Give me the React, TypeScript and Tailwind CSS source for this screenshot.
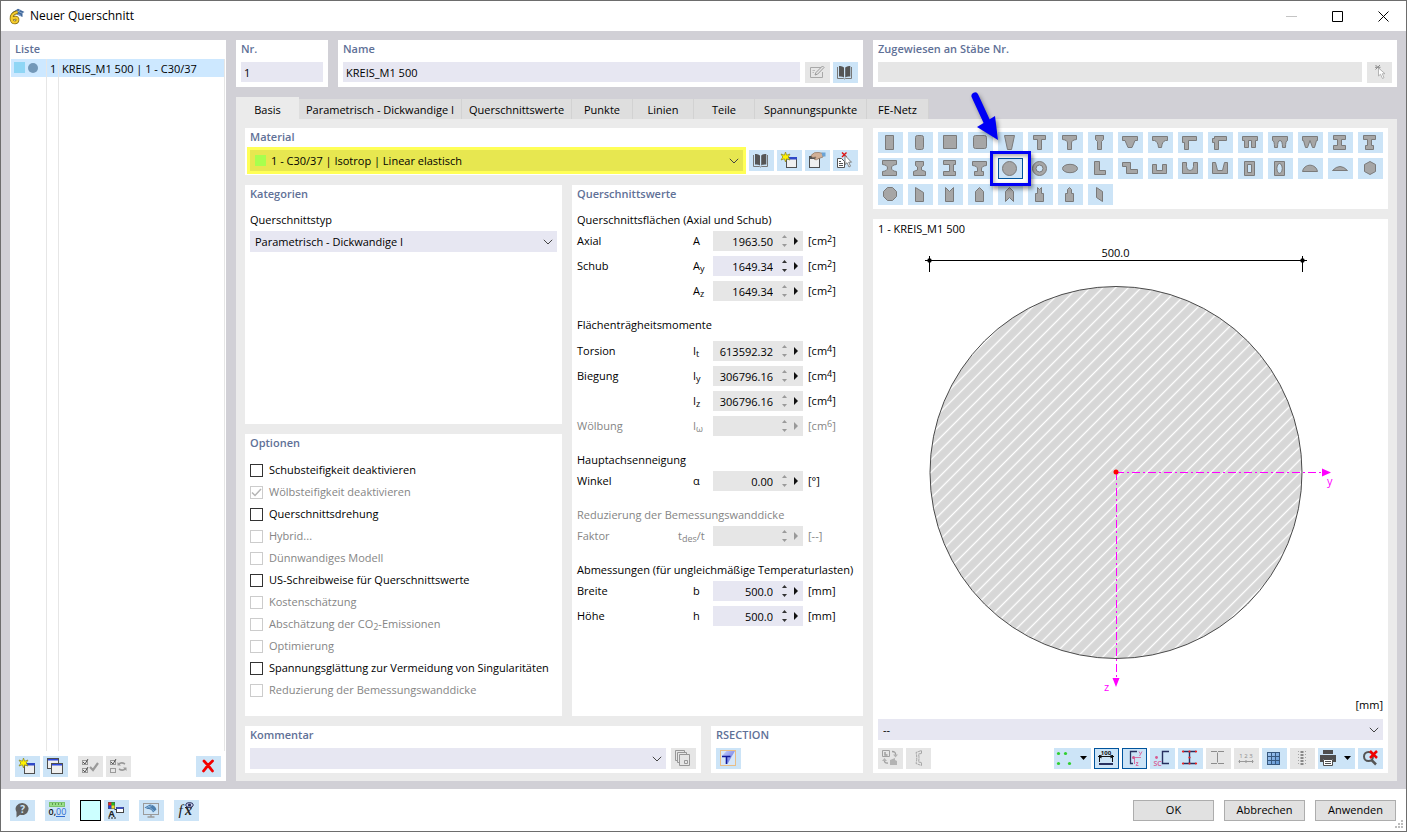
import type { ReactNode } from "react";
import clsx from "clsx";

const tabs = [
  { label: "Basis", width: "w-[63px]", active: true },
  { label: "Parametrisch - Dickwandige I", width: "w-[163px]" },
  { label: "Querschnittswerte", width: "w-[110px]" },
  { label: "Punkte", width: "w-[61px]" },
  { label: "Linien", width: "w-[61px]" },
  { label: "Teile", width: "w-[61px]" },
  { label: "Spannungspunkte", width: "w-[112px]" },
  { label: "FE-Netz", width: "w-[62px]" },
];

const options = [
  { label: "Schubsteifigkeit deaktivieren", enabled: true },
  { label: "Wölbsteifigkeit deaktivieren", checked: true },
  { label: "Querschnittsdrehung", enabled: true },
  { label: "Hybrid..." },
  { label: "Dünnwandiges Modell" },
  { label: "US-Schreibweise für Querschnittswerte", enabled: true },
  { label: "Kostenschätzung" },
  { label: <>Abschätzung der CO<sub className="bottom-0 align-[-2px] text-[9px] leading-none">2</sub>-Emissionen</> },
  { label: "Optimierung" },
  { label: "Spannungsglättung zur Vermeidung von Singularitäten", enabled: true },
  { label: "Reduzierung der Bemessungswanddicke" },
];

type Field = {
  name: string;
  sym: string;
  sub?: string;
  tail?: string;
  value: string;
  unit: string;
  sup?: string;
  state: "edit" | "read" | "off";
};

const groups: { title: string; off?: boolean; wide?: boolean; fields: Field[] }[] = [
  {
    title: "Querschnittsflächen (Axial und Schub)",
    fields: [
      { name: "Axial", sym: "A", value: "1963.50", unit: "cm", sup: "2", state: "read" },
      { name: "Schub", sym: "A", sub: "y", value: "1649.34", unit: "cm", sup: "2", state: "edit" },
      { name: "", sym: "A", sub: "z", value: "1649.34", unit: "cm", sup: "2", state: "read" },
    ],
  },
  {
    title: "Flächenträgheitsmomente",
    wide: true,
    fields: [
      { name: "Torsion", sym: "I", sub: "t", value: "613592.32", unit: "cm", sup: "4", state: "read" },
      { name: "Biegung", sym: "I", sub: "y", value: "306796.16", unit: "cm", sup: "4", state: "read" },
      { name: "", sym: "I", sub: "z", value: "306796.16", unit: "cm", sup: "4", state: "read" },
      { name: "Wölbung", sym: "I", sub: "ω", value: "", unit: "cm", sup: "6", state: "off" },
    ],
  },
  { title: "Hauptachsenneigung", fields: [{ name: "Winkel", sym: "α", value: "0.00", unit: "°", state: "read" }] },
  {
    title: "Reduzierung der Bemessungswanddicke",
    off: true,
    fields: [{ name: "Faktor", sym: "t", sub: "des", tail: "/t", value: "", unit: "--", state: "off" }],
  },
  {
    title: "Abmessungen (für ungleichmäßige Temperaturlasten)",
    fields: [
      { name: "Breite", sym: "b", value: "500.0", unit: "mm", state: "edit" },
      { name: "Höhe", sym: "h", value: "500.0", unit: "mm", state: "edit" },
    ],
  },
];

// outlines on a 25x21 grid
const shapes = [
  "M7.5 3.5H15.5V17.5H7.5Z",
  "M9.5 3.5H13.5Q15.5 3.5 15.5 5.5V15.5Q15.5 17.5 13.5 17.5H9.5Q7.5 17.5 7.5 15.5V5.5Q7.5 3.5 9.5 3.5Z",
  "M5.5 3.5H18.5V16.5H5.5Z",
  "M7.5 3.5H16.5Q18.5 3.5 18.5 5.5V14.5Q18.5 16.5 16.5 16.5H7.5Q5.5 16.5 5.5 14.5V5.5Q5.5 3.5 7.5 3.5Z",
  "M6.5 3.5H16.5L13.5 17.5H9.5Z",
  "M5.5 3.5H17.5V7.5H13.5V17.5H9.5V7.5H5.5Z",
  "M4.5 3.5H18.5V7.5Q13.5 8 13.5 11V17.5H9.5V11Q9.5 8 4.5 7.5Z",
  "M7.5 3.5H15.5V7.5L13.5 9.5V17.5H9.5V9.5L7.5 7.5Z",
  "M4.5 4.5H19.5V8.5H17L14 15.5H10L7 8.5H4.5Z",
  "M4.5 4.5H19.5V8.5H17.5Q14 9.5 13.5 15.5H10.5Q10 9.5 6.5 8.5H4.5Z",
  "M4.5 4.5H18.5V8.5H10.5V17.5H6.5V10.5H4.5Z",
  "M6.5 4.5H18.5V8.5H10.5V17.5H6.5V10.5H4.5V6.5H6.5Z",
  "M4.5 4.5H19.5V8.5H17.5V15.5H13.5V8.5H10.5V15.5H6.5V8.5H4.5Z",
  "M4.5 4.5H19.5V8.5Q17.5 8.5 17.5 15.5H14.5Q14.5 8.5 12 8.5Q9.5 8.5 9.5 15.5H6.5Q6.5 8.5 4.5 8.5Z",
  "M4.5 4.5H19.5V8.5H18.5L16.5 15.5H14.5L12 8.5L9.5 15.5H7.5L5.5 8.5H4.5Z",
  "M5.5 3.5H17.5V7.5H13.5V13.5H17.5V17.5H5.5V13.5H9.5V7.5H5.5Z",
  "M5.5 3.5H17.5V7.5H13.5V13.5H15.5V17.5H7.5V13.5H9.5V7.5H5.5Z",

  "M4.5 2.5H18.5V6.5Q13.5 7 13.5 10Q13.5 13 18.5 13.5V17.5H4.5V13.5Q9.5 13 9.5 10Q9.5 7 4.5 6.5Z",
  "M7.5 3.5H15.5V7.5L13.5 9V12L17.5 13.5V17.5H5.5V13.5L9.5 12V9L7.5 7.5Z",
  "M5.5 2.5H17.5V6.5H15.5V13.5H17.5V17.5H5.5V13.5H11.5V6.5H5.5Z",
  "M4.5 3.5H18.5V7.5Q13.5 8 13.5 11V13.5H15.5V17.5H6.5V13.5H9.5V11Q9.5 8 4.5 7.5Z",
  "M18.5 10.5A7 7 0 1 1 4.5 10.5A7 7 0 1 1 18.5 10.5Z",
  "M18.5 10.5A7 7 0 1 1 4.5 10.5A7 7 0 1 1 18.5 10.5ZM15 10.5A3.5 3.5 0 1 0 8 10.5A3.5 3.5 0 1 0 15 10.5Z",
  "M19.5 10.5A7.5 4.2 0 1 1 4.5 10.5A7.5 4.2 0 1 1 19.5 10.5Z",
  "M6.5 3.5H11.5V12.5H17.5V16.5H6.5Z",
  "M4.5 4.5H12.5V11.5H19.5V15.5H8.5V8.5H4.5Z",
  "M4.5 6.5H8.5V12.5H14.5V6.5H18.5V15.5H4.5Z",
  "M4.5 4.5H8.5V8.5Q8.5 12.5 12 12.5Q15.5 12.5 15.5 8.5V4.5H19.5V15.5H4.5Z",
  "M4.5 4.5H7.5L9.5 12.5H14.5L16.5 4.5H19.5V15.5H4.5Z",
  "M6.5 3.5H16.5V17.5H6.5ZM9.5 6.5V14.5H13.5V6.5Z",
  "M6.5 3.5H16.5V17.5H6.5ZM11.5 5.5A2.7 4.9 0 1 0 11.6 5.5Z",
  "M4.5 13.5A7.6 7.6 0 0 1 19.5 13.5Z",
  "M4.5 12.5Q12 4.5 19.5 12.5Z",
  "M12 3.5L17.5 6.5V13.5L12 16.5L6.5 13.5V6.5Z",

  "M9.5 3.5H14.5L18.5 7.5V12.5L14.5 16.5H9.5L5.5 12.5V7.5Z",
  "M7.5 3.5L15.5 8.5V17.5H7.5Z",
  "M7.5 3.5L11.5 7.5L15.5 3.5V17.5H7.5Z",
  "M7.5 7.5L11.5 3.5L15.5 7.5V17.5H7.5Z",
  "M7.5 7.5L11.5 3.5L15.5 7.5V17.5L11.5 13.5L7.5 17.5Z",
  "M9.5 3.5L11.5 5.5L13.5 3.5V9.5H15.5V17.5H7.5V9.5H9.5Z",
  "M9.5 5.5L11.5 3.5L13.5 5.5V9.5H15.5V17.5H7.5V9.5H9.5Z",
  "M8.5 3.5L14.5 7.5V17.5L8.5 13.5Z",
];
const SELECTED = 21;

function Icon({ children, wide }: { children: ReactNode; wide?: boolean }) {
  return (
    <svg viewBox={wide ? "0 0 37 21" : "0 0 25 21"} className="size-full" fill="none" aria-hidden="true">
      {children}
    </svg>
  );
}

const NewIcon = () => (
  <Icon>
    <rect x="9.5" y="7.5" width="10" height="10" fill="#efefef" stroke="#4f4f4f" />
    <rect x="10" y="7" width="10" height="2.5" fill="#2f49c8" />
    <path d="M8.5 2L9.6 5.2L13 4L11.2 7L13 10L9.6 8.8L8.5 12L7.4 8.8L4 10L5.8 7L4 4L7.4 5.2Z" fill="#fff200" stroke="#8a8420" strokeWidth=".7" />
  </Icon>
);

const CopyIcon = () => (
  <Icon>
    <rect x="4.5" y="2.5" width="11" height="10" fill="#efefef" stroke="#4f4f4f" />
    <rect x="5" y="3" width="10" height="1.5" fill="#2f49e0" />
    <rect x="8.5" y="7.5" width="11" height="10" fill="#efefef" stroke="#4f4f4f" />
    <rect x="9" y="8" width="10" height="1.5" fill="#2f49e0" />
  </Icon>
);

const CheckAllIcon = () => (
  <Icon>
    <g stroke="#9a9a9a">
      <rect x="4.5" y="4.5" width="5" height="4" />
      <rect x="4.5" y="12.5" width="5" height="4" />
      <path d="M5 6L7 8L10 3M5 14L7 16L10 11" stroke="#555" />
      <path d="M12 11L15 14L20 7" strokeWidth="2.2" />
    </g>
  </Icon>
);

const SwapChecksIcon = () => (
  <Icon>
    <g stroke="#9a9a9a">
      <rect x="4.5" y="4.5" width="5" height="4" />
      <rect x="4.5" y="12.5" width="5" height="4" />
      <path d="M5 6L7 8L10 3" stroke="#555" />
      <path d="M12.5 8.5Q15 5.5 19 8M19.5 12.5Q17 15.5 13 13" strokeWidth="1.5" />
      <path d="M11.5 6V9.5H15ZM20.5 15V11.5H17Z" fill="#9a9a9a" stroke="none" />
    </g>
  </Icon>
);

const DeleteIcon = () => (
  <Icon>
    <path d="M8 5Q12 9 16.5 15M16.5 5Q12 9 7.5 15" stroke="#f40000" strokeWidth="2.8" strokeLinecap="round" />
  </Icon>
);

const BookIcon = () => (
  <Icon>
    <path d="M4.5 5V16.5H10.5L11.5 17L12.5 16.5H18.5V5" stroke="#777" />
    <path d="M6 4Q9 3.5 11 5.5V15.5Q9 14 6 14.5ZM17.3 4Q14.3 3.5 12.2 5.5V15.5Q14.3 14 17.3 14.5Z" fill="#555" />
  </Icon>
);

const EditIcon = () => (
  <Icon>
    <path d="M16 5.5H5.5V15.5H17.5V10" stroke="#a8a8a8" />
    <path d="M10 13L11 10.5L17.5 4L19 5.5L12.5 12.2Z" fill="#e6e6e6" stroke="#999" />
    <path d="M7.5 8.5H10M7.5 10.5H9" stroke="#bbb" />
  </Icon>
);

const EditMaterialIcon = () => (
  <Icon>
    <rect x="4.5" y="6.5" width="10" height="11" fill="#efefef" stroke="#4f4f4f" />
    <rect x="5" y="7" width="9" height="2" fill="#555" />
    <path d="M6 5.5Q9 1.5 14 2.5L18 3.5V7L14 8.5Q11 10.5 9.5 9.5L11 7L7.5 7.5Z" fill="#d2b096" stroke="#8d7460" strokeWidth=".7" />
    <path d="M16.5 2.5H20.5V6.5H17.5Z" fill="#6aa3d6" />
  </Icon>
);

const PickMaterialIcon = () => (
  <Icon>
    <path d="M4.5 8.5H8.5L11.5 11.5V17.5H4.5Z" fill="#fff" stroke="#555" />
    <path d="M6 11.5H8M6 13.5H10M6 15.5H10" stroke="#555" />
    <path d="M9 2.5L13.5 7M13.5 2.5L9 7" stroke="#e01010" strokeWidth="1.4" />
    <path d="M12 5.5V14.5L14 12.7L16 17L17.5 16.2L15.7 12.2H18.5Z" fill="#fff" stroke="#666" strokeWidth=".8" />
  </Icon>
);

const PickIcon = () => (
  <Icon>
    <path d="M8.5 3L13 7.5M13 3L8.5 7.5M8 5.3H13.5" stroke="#8c8c8c" />
    <path d="M11.5 6V14L13.5 12.2L15.5 16.5L17 15.7L15.3 11.7H18Z" fill="#fff" stroke="#a5a5a5" strokeWidth=".8" />
  </Icon>
);

const StackIcon = () => (
  <Icon>
    <g stroke="#979797" fill="#e6e6e6">
      <path d="M4.5 2.5H13.5V12.5H4.5Z" />
      <path d="M6.5 4.5H15.5V14.5H6.5Z" />
      <path d="M8.5 6.5H18.5V17.5H8.5Z" />
      <path d="M13.5 12.5H16.5V15.5H13.5Z" />
    </g>
  </Icon>
);

const RsectionIcon = () => (
  <Icon>
    <defs>
      <linearGradient id="rs" x1="0" y1="0" x2="1" y2="1">
        <stop offset="0" stopColor="#c9d0fa" />
        <stop offset="1" stopColor="#5563e0" />
      </linearGradient>
    </defs>
    <rect x="4.5" y="2.5" width="15" height="15" fill="#d6e6f8" stroke="#e8bd86" />
    <path d="M6 8L10.5 3H19L16 8L11.5 16L10.5 9Z" fill="url(#rs)" />
    <path d="M6 8.5H14.5M10.5 8.5V16" stroke="#10189a" strokeWidth="1.6" />
  </Icon>
);

const RotateIcon = () => (
  <Icon>
    <g stroke="#a0a0a0">
      <path d="M4.5 2.5H11.5V8.5H4.5Z" />
      <path d="M7 4V7H9.5" strokeWidth="1.5" />
      <path d="M14 3.5Q18 3.5 17.5 7M6.5 12Q6 15.5 10 15" strokeWidth="1.3" />
      <path d="M15 6.5H20L17.5 9.5ZM4 13H9L6.5 10ZM12 12L17 10V12L19 13V17H12Z" fill="#b3b3b3" stroke="none" />
    </g>
  </Icon>
);

const ProfileIcon = () => (
  <Icon>
    <path d="M15.5 5.5V2.5L10 4.5Q11.5 10 10 15.5L15.5 17.5V14.5L12.5 14Q13.5 10 12.5 6Z" stroke="#a5a5a5" strokeDasharray="3 .6" />
  </Icon>
);

const PointsIcon = () => (
  <Icon wide>
    <g fill="#2fcf2f">
      <circle cx="4.5" cy="5.5" r="1.6" />
      <circle cx="11.5" cy="5.5" r="1.6" />
      <circle cx="4.5" cy="15.5" r="1.6" />
      <circle cx="15.5" cy="15.5" r="1.6" />
    </g>
    <path d="M26 8H33L29.5 12Z" fill="#000" />
  </Icon>
);

const DimensionIcon = () => (
  <Icon>
    <text x="12" y="7" fontSize="6" fontWeight="700" textAnchor="middle" fill="#111">100</text>
    <path d="M4 8.5H20M5.5 7V14M18.5 7V14" stroke="#111" />
    <path d="M4 8.5L7.5 6.5V10.5ZM20 8.5L16.5 6.500V10.5Z" fill="#111" />
    <path d="M5 16H19" stroke="#27305f" strokeWidth="2" />
  </Icon>
);

const AxesIcon = () => (
  <Icon>
    <path d="M15 3.5H8.5V15.5H11" stroke="#27305f" strokeWidth="1.3" />
    <path d="M11.5 9.5H19M12.5 9V16" stroke="#d870a5" />
    <circle cx="11.5" cy="9.5" r="1.5" fill="#d8588f" />
    <path d="M17 3.5L18.5 6M20 3.5L17.5 8M14 14.5H16L14 17.5H16.5" stroke="#d870a5" />
  </Icon>
);

const ShearCenterIcon = () => (
  <Icon>
    <path d="M19 3.5H12.5V15.5H19" stroke="#27305f" strokeWidth="1.4" />
    <circle cx="6.5" cy="9.5" r="1.4" fill="#d8588f" />
    <text x="3.5" y="18" fontSize="7" fontWeight="600" fill="#d8588f">SC</text>
  </Icon>
);

const StressPointsIcon = () => (
  <Icon>
    <path d="M5 3.5H18M5 15.5H18M11.5 3.5V15.5" stroke="#27305f" strokeWidth="1.4" />
    <g fill="#f02020">
      <circle cx="5" cy="3.5" r="1.1" />
      <circle cx="11.5" cy="3.5" r="1.1" />
      <circle cx="18" cy="3.5" r="1.1" />
      <circle cx="11.5" cy="9.5" r="1.1" />
      <circle cx="5" cy="15.5" r="1.1" />
      <circle cx="11.5" cy="15.5" r="1.1" />
      <circle cx="18" cy="15.5" r="1.1" />
    </g>
  </Icon>
);

const SectionIcon = () => (
  <Icon>
    <path d="M5 3.5H11M12 3.5H18M5 15.5H11M12 15.5H18M11.5 4.5V14.5" stroke="#8c8c8c" />
  </Icon>
);

const NumbersIcon = () => (
  <Icon>
    <text x="12" y="10" fontSize="6" textAnchor="middle" fill="#8c8c8c">1 2 3</text>
    <path d="M4.5 13.5H19.5M5.5 12V15M12 12V15M18.5 12V15" stroke="#999" />
  </Icon>
);

const GridIcon = () => (
  <Icon>
    <defs>
      <linearGradient id="gr" x1="0" y1="0" x2="1" y2="1">
        <stop offset="0" stopColor="#a9cdf5" />
        <stop offset="1" stopColor="#5a90cf" />
      </linearGradient>
    </defs>
    <rect x="5.5" y="4.5" width="12" height="12" fill="url(#gr)" stroke="#36587f" />
    <path d="M5.5 8.5H17.5M5.5 12.5H17.5M9.5 4.5V16.5M13.5 4.5V16.5" stroke="#36587f" />
  </Icon>
);

const ScaleIcon = () => (
  <Icon>
    <path d="M12 3V18" stroke="#888" strokeWidth="3" strokeDasharray="2 1" />
    <path d="M8.5 3V18M15.5 3V18" stroke="#a5a5a5" strokeDasharray="1 2" />
  </Icon>
);

const PrintIcon = () => (
  <Icon wide>
    <path d="M5 2H15V6H5ZM2 7H18V14H15V11H5V14H2Z" fill="#4f4f4f" />
    <path d="M5.5 11.5H14.5V17.5H5.5Z" fill="#fff" stroke="#4f4f4f" />
    <path d="M7 13.5H13M7 15.5H13" stroke="#4f4f4f" />
    <path d="M26 8H33L29.5 12Z" fill="#000" />
  </Icon>
);

const ResetZoomIcon = () => (
  <Icon>
    <circle cx="10.5" cy="8.5" r="4.5" stroke="#555" strokeWidth="2" />
    <path d="M13.5 12L18 16.5" stroke="#555" strokeWidth="2.5" />
    <path d="M12 3L19 10M19 3L12 10" stroke="#f00000" strokeWidth="2.5" />
  </Icon>
);

const HelpIcon = () => (
  <Icon>
    <path d="M12.5 3A6.5 6 0 1 1 10 14.7L6.5 17.5V12A6.5 6 0 0 1 12.5 3Z" fill="#606060" />
    <text x="12.7" y="12.7" fontSize="10" fontWeight="700" textAnchor="middle" fill="#cce4f7">?</text>
  </Icon>
);

const DecimalsIcon = () => (
  <Icon>
    <rect x="4.5" y="2.5" width="15" height="4" fill="#9ade88" stroke="#7cc46c" />
    <path d="M7.5 3V5M10.5 3V5M13.5 3V5M16.5 3V5" stroke="#5c9c50" />
    <text x="3.5" y="15" fontSize="9" fontWeight="600" fill="#111">0,<tspan fill="#2f6bd0" fontWeight="400">00</tspan></text>
    <path d="M11 16.5H20" stroke="#2f6bd0" />
  </Icon>
);

const DisplayIcon = () => (
  <Icon>
    <rect x="4" y="2" width="7" height="7" fill="#555" />
    <rect x="4.500" y="2.5" width="3" height="3" fill="#f02020" />
    <rect x="7.500" y="2.5" width="3" height="3" fill="#20c020" />
    <rect x="4.500" y="5.500" width="3" height="3" fill="#2040e0" />
    <rect x="7.500" y="5.500" width="3" height="3" fill="#f0e020" />
    <text x="4.5" y="16.500" fontSize="9" fontWeight="700" fill="#222">A</text>
    <path d="M4 18H12" stroke="#222" strokeDasharray="2 1" />
    <path d="M10.5 9.5H13" stroke="#333" />
    <rect x="12.5" y="7.500" width="7" height="5" fill="#fff" stroke="#444" />
    <rect x="12.5" y="7" width="7" height="2" fill="#3f51b8" />
  </Icon>
);

const MonitorIcon = () => (
  <Icon>
    <rect x="4.5" y="3.5" width="15" height="11" fill="#cce4f7" stroke="#9a9a9a" />
    <path d="M5.5 7.500L11 4.5Q16 5 17.5 9.5L14 12.5Q12.5 8.5 8.5 9Z" fill="#4d7fae" />
    <path d="M9 6L15 11M7 8L13 5.5" stroke="#9bc0e2" strokeWidth=".7" />
    <path d="M12 14.5V17M8.5 17H15.5" stroke="#9a9a9a" strokeWidth="1.4" />
  </Icon>
);

const FunctionIcon = () => (
  <Icon>
    <g fill="#222" fontFamily="Liberation Serif, serif" fontStyle="italic">
      <text x="4.5" y="14.500" fontSize="15">f</text>
      <text x="11" y="15" fontSize="14" fontWeight="700">x</text>
    </g>
    <path d="M11 7.5H18" stroke="#222" />
    <ellipse cx="15.5" cy="5" rx="3.800" ry="2.400" fill="#cfd2ee" stroke="#27305f" />
    <circle cx="15.5" cy="5" r="1.600" fill="#27305f" />
  </Icon>
);

function IconButton({ label, off, pressed, wide, children }: {
  label: string;
  off?: boolean;
  pressed?: boolean;
  wide?: boolean;
  children: ReactNode;
}) {
  return (
    <button
      type="button"
      aria-label={label}
      disabled={off}
      className={clsx(
        "relative block h-[21px] flex-none",
        wide ? "w-[37px]" : "w-[25px]",
        off ? "bg-[#e6e6e6]" : "bg-[#cce4f7]",
        pressed && "outline outline-1 -outline-offset-1 outline-[#00549d]",
      )}
    >
      {children}
    </button>
  );
}

function Panel({ title, className, children }: { title: string; className?: string; children: ReactNode }) {
  return (
    <section className={clsx("flex flex-col bg-white px-[5px] pb-1", className)}>
      <h2 className="mb-1 h-[18px] font-semibold leading-[18px] text-[#5f7197]">{title}</h2>
      {children}
    </section>
  );
}

function Select({ label, value, className, swatch }: { label: string; value: string; className?: string; swatch?: boolean }) {
  return (
    <div className={clsx("relative h-[21px]", className)}>
      <select
        aria-label={label}
        className={clsx("size-full appearance-none bg-transparent outline-none", swatch ? "pl-[21px]" : "pl-[5px]")}
      >
        <option>{value}</option>
      </select>
      {swatch && <span className="pointer-events-none absolute left-[5px] top-[5px] size-[11px] bg-[#a8ff4e]" />}
      <svg viewBox="0 0 10 6" className="pointer-events-none absolute right-1 top-2 h-1.5 w-2.5" fill="none" stroke="#444">
        <path d="M.8 .8L5 5L9.2 .8" />
      </svg>
    </div>
  );
}

function FieldRow({ field }: { field: Field }) {
  const off = field.state === "off";
  const id = `f-${field.sym}${field.sub ?? ""}`;
  return (
    <div className={clsx("flex h-5 items-center", off && "text-[#858585]")}>
      <label htmlFor={id} className="flex w-[136px] justify-between leading-5">
        <span>{field.name}</span>
        <span className={clsx("whitespace-nowrap", field.tail ? "w-[35px]" : "w-5")}>
          {field.sym}
          {field.sub && <sub className="bottom-0 align-[-2px] text-[9px] leading-none">{field.sub}</sub>}
          {field.tail}
        </span>
      </label>
      <div className={clsx("flex h-5 w-[90px] items-center", field.state === "edit" ? "bg-[#e7e7f2]" : "bg-[#e6e6e6]")}>
        <input
          id={id}
          defaultValue={field.value}
          readOnly={field.state === "read"}
          disabled={off}
          className="h-5 w-[60px] bg-transparent pt-px text-right outline-none"
        />
        <span className={clsx("ml-[7px] flex flex-col gap-1.5", field.state === "edit" ? "text-[#333]" : "text-[#9a9a9a]")}>
          <button type="button" aria-label="Erhöhen" className="block h-[3px] w-[9px]">
            <svg viewBox="0 0 9 3" className="size-full" fill="currentColor"><path d="M4.5 0L7 3H2Z" /></svg>
          </button>
          <button type="button" aria-label="Verringern" className="block h-[3px] w-[9px]">
            <svg viewBox="0 0 9 3" className="size-full" fill="currentColor"><path d="M4.5 3L7 0H2Z" /></svg>
          </button>
        </span>
        <button type="button" aria-label="Mehr" className={clsx("ml-[5px] h-2 w-1", off ? "text-[#999]" : "text-[#111]")}>
          <svg viewBox="0 0 4 8" className="size-full" fill="currentColor"><path d="M0 0L4 4L0 8Z" /></svg>
        </button>
      </div>
      <span className="ml-[5px] whitespace-nowrap">
        [{field.unit}
        {field.sup && <sup className="top-0 align-[3px] text-[9px] leading-none">{field.sup}</sup>}]
      </span>
    </div>
  );
}

function ShapeGrid() {
  return (
    <div className="grid grid-cols-[repeat(17,25px)] gap-[5px] bg-white px-[5px] py-1">
      {shapes.map((d, i) => (
        <div key={i} className="relative h-[21px]">
          <IconButton label={`Querschnittsform ${i + 1}`} pressed={i === SELECTED}>
            <Icon>
              <path d={d} fill="#a6a6a6" stroke="#7a7a7a" fillRule="evenodd" />
            </Icon>
          </IconButton>
          {i === SELECTED && (
            <>
              <span className="pointer-events-none absolute -inset-x-2 -inset-y-[7px] z-10 border-[3px] border-[#0000f5] shadow-[2px_3px_4px_rgba(0,0,0,0.4),inset_1px_2px_4px_rgba(0,0,0,0.35)]" />
              <svg
                viewBox="0 0 40 60"
                className="pointer-events-none absolute -left-7 -top-[68px] z-10 h-[60px] w-10 drop-shadow-[2px_3px_2px_rgba(0,0,0,0.4)]"
              >
                <path d="M5 6L17 32" stroke="#0000f5" strokeWidth="7" strokeLinecap="round" />
                <path d="M7 37L25 26L28 50Z" fill="#0000f5" />
              </svg>
            </>
          )}
        </div>
      ))}
    </div>
  );
}

function Preview() {
  return (
    <svg viewBox="0 0 505 458" className="min-h-[400px] w-full flex-1 text-[11px]">
      <defs>
        <pattern id="hatch" width="9" height="9" patternUnits="userSpaceOnUse" patternTransform="rotate(45)">
          <rect width="9" height="9" fill="#d7d7d7" />
          <path d="M4.5 0V9" stroke="#fff" strokeWidth="1.3" />
        </pattern>
      </defs>
      <path d="M47 21.5H429M51.5 17V33M424.5 17V33" stroke="#000" />
      <circle cx="51.5" cy="21.5" r="2.2" />
      <circle cx="424.5" cy="21.5" r="2.2" />
      <text x="237.5" y="18" textAnchor="middle">500.0</text>
      <circle cx="238" cy="233.5" r="186" fill="url(#hatch)" stroke="#4a4a4a" />
      <path d="M238 233.5H444M238.5 233V439" stroke="#ff00ff" strokeDasharray="8 3 2 3" />
      <path d="M444 229.5L453 233.5L444 237.5ZM234.5 439L238 448L241.5 439Z" fill="#ff00ff" />
      <circle cx="238" cy="233" r="2.5" fill="#f00" />
      <text x="449" y="246" fill="#ff00ff">y</text>
      <text x="226" y="452" fill="#ff00ff">z</text>
    </svg>
  );
}

export default function App() {
  return (
    <div className="flex min-h-screen flex-col border border-[#6d6d6d] bg-white font-['Open_Sans','Noto_Sans',sans-serif] text-[11px] leading-4 text-black">
      <header className="flex h-[30px] items-center pl-[7px]">
        <svg viewBox="0 0 17 17" className="size-[17px]" aria-hidden="true">
          <path d="M4 4.5L10 .8L16.500 4L14.500 5V9L10 7Z" fill="#3f679b" />
          <path d="M6 4L13 7.500M8 2.5L15 5.500M7 5.500L12.500 2" stroke="#a8c2e0" strokeWidth=".7" />
          <path d="M9.500 4Q3 5.500 3.500 11Q4 14.500 7 14.500Q10 14 9.500 11Q8.500 8.500 4.500 10.500" fill="none" stroke="#7b6410" strokeWidth="3.600" />
          <path d="M9.500 4Q3 5.500 3.500 11Q4 14.500 7 14.500Q10 14 9.500 11Q8.500 8.500 4.500 10.500" fill="none" stroke="#f6cd2e" strokeWidth="2.200" />
        </svg>
        <h1 className="ml-[5px] flex-1 text-xs">Neuer Querschnitt</h1>
        <button type="button" aria-label="Minimieren" className="grid h-full w-[45px] place-items-center">
          <svg viewBox="0 0 11 11" className="size-[11px]" stroke="#c4c4c4"><path d="M0 5.5H11" /></svg>
        </button>
        <button type="button" aria-label="Maximieren" className="grid h-full w-[46px] place-items-center">
          <svg viewBox="0 0 11 11" className="size-[11px]" stroke="#000" fill="none"><path d="M.5 .5H10.5V10.5H.5Z" /></svg>
        </button>
        <button type="button" aria-label="Schließen" className="grid h-full w-[46px] place-items-center">
          <svg viewBox="0 0 11 11" className="size-[11px]" stroke="#000"><path d="M.5 .5L10.5 10.5M10.5 .5L.5 10.5" /></svg>
        </button>
      </header>

      <main className="flex flex-1 gap-2.5 bg-[#d1d0d6] px-[9px] pb-2 pt-[9px]">
        <aside className="flex w-[216px] flex-none flex-col bg-white pb-1">
          <h2 className="h-[19px] px-[5px] font-semibold leading-[18px] text-[#5f7197]">Liste</h2>
          <div className="mx-px flex flex-1">
            <div className="w-9 border-r border-[#e6e6e6]">
              <div className="flex h-[18px] items-center gap-[3px] bg-[#cde8ff] pb-px pl-[3px]">
                <span className="size-[11px] bg-[#8fd6f5]" />
                <span className="size-2.5 rounded-full bg-[#7398b8]" />
              </div>
            </div>
            <div className="w-3 border-r border-[#e6e6e6]">
              <div className="h-[18px] bg-[#cde8ff] pl-[3px] leading-5">1</div>
            </div>
            <div className="flex-1 border-r border-[#e6e6e6]">
              <div className="h-[18px] bg-[#cde8ff] pl-[3px] leading-5">KREIS_M1 500 | 1 - C30/37</div>
            </div>
          </div>
          <div className="mt-[5px] flex gap-[3px] px-[5px]">
            <IconButton label="Neu"><NewIcon /></IconButton>
            <IconButton label="Kopieren"><CopyIcon /></IconButton>
            <div className="ml-[7px] flex gap-[3px]">
              <IconButton label="Alle auswählen" off><CheckAllIcon /></IconButton>
              <IconButton label="Auswahl umkehren" off><SwapChecksIcon /></IconButton>
            </div>
            <div className="ml-auto"><IconButton label="Löschen"><DeleteIcon /></IconButton></div>
          </div>
        </aside>

        <div className="flex min-w-0 flex-1 flex-col">
          <div className="flex gap-2.5">
            <Panel title="Nr." className="h-[47px] w-[92px]">
              <input aria-label="Nr." defaultValue="1" className="h-5 w-full bg-[#e7e7f2] px-[3px] pt-px outline-none" />
            </Panel>
            <Panel title="Name" className="h-[47px] w-[525px]">
              <div className="flex gap-[3px]">
                <input aria-label="Name" defaultValue="KREIS_M1 500" className="mr-0.5 h-5 min-w-0 flex-1 bg-[#e7e7f2] px-[3px] pt-px outline-none" />
                <IconButton label="Bearbeiten" off><EditIcon /></IconButton>
                <IconButton label="Bibliothek"><BookIcon /></IconButton>
              </div>
            </Panel>
            <Panel title="Zugewiesen an Stäbe Nr." className="h-[47px] min-w-0 flex-1">
              <div className="flex gap-[5px]">
                <input aria-label="Zugewiesen an Stäbe Nr." readOnly className="h-5 min-w-0 flex-1 bg-[#e6e6e6] px-1 outline-none" />
                <IconButton label="Auswählen" off><PickIcon /></IconButton>
              </div>
            </Panel>
          </div>

          <div role="tablist" className="mt-2.5 flex items-end">
            {tabs.map((tab) => (
              <button
                key={tab.label}
                type="button"
                role="tab"
                aria-selected={!!tab.active}
                className={clsx(
                  "whitespace-nowrap text-center",
                  tab.width,
                  tab.active ? "h-[22px] bg-[#ebebeb] pt-1" : "h-5 border-r border-[#d2d2d2] bg-[#dedede] pt-0.5",
                )}
              >
                {tab.label}
              </button>
            ))}
          </div>

          <div className="flex flex-1 gap-2.5 bg-[#ebebeb] px-[9px] pb-2 pt-[9px]">
            <div className="flex w-[618px] flex-none flex-col gap-2.5">
              <Panel title="Material" className="h-[47px]">
                <div className="flex gap-[3px]">
                  <Select
                    label="Material"
                    value="1 - C30/37 | Isotrop | Linear elastisch"
                    className="mr-[3px] flex-1 bg-[#e7e750] ring-[3px] ring-[#ffff57]"
                    swatch
                  />
                  <IconButton label="Materialbibliothek"><BookIcon /></IconButton>
                  <IconButton label="Neues Material"><NewIcon /></IconButton>
                  <IconButton label="Material bearbeiten"><EditMaterialIcon /></IconButton>
                  <IconButton label="Material auswählen"><PickMaterialIcon /></IconButton>
                </div>
              </Panel>

              <div className="flex flex-1 gap-2.5">
                <div className="flex w-[317px] flex-col gap-2.5">
                  <Panel title="Kategorien" className="h-[239px]">
                    <p className="mb-0.5 mt-1 h-[18px] leading-[18px]">Querschnittstyp</p>
                    <Select label="Querschnittstyp" value="Parametrisch - Dickwandige I" className="bg-[#e7e7f2]" />
                  </Panel>
                  <Panel title="Optionen" className="flex-1">
                    <div className="mt-[3px]">
                      {options.map((opt, i) => (
                        <label
                          key={i}
                          className={clsx("flex h-[22px] items-center gap-1.5 whitespace-nowrap", !opt.enabled && "text-[#858585]")}
                        >
                          <span className="relative size-[13px]">
                            <input
                              type="checkbox"
                              disabled={!opt.enabled}
                              defaultChecked={opt.checked}
                              className={clsx(
                                "block size-[13px] appearance-none border bg-white",
                                opt.enabled ? "border-[#333]" : "border-[#ccc]",
                              )}
                            />
                            {opt.checked && (
                              <svg viewBox="0 0 13 13" className="pointer-events-none absolute inset-0" fill="none" stroke="#b5b5b5" strokeWidth="1.5">
                                <path d="M2 6.5L5 9.5L11 3" />
                              </svg>
                            )}
                          </span>
                          <span className="leading-[18px]">{opt.label}</span>
                        </label>
                      ))}
                    </div>
                  </Panel>
                </div>

                <Panel title="Querschnittswerte" className="flex-1">
                  <div className="mt-[3px] flex flex-col gap-3.5">
                    {groups.map((group) => (
                      <div key={group.title}>
                        <h3
                          className={clsx(
                            "h-5 whitespace-nowrap leading-5",
                            group.wide ? "mb-1.5" : "mb-px",
                            group.off && "text-[#858585]",
                          )}
                        >
                          {group.title}
                        </h3>
                        <div className="flex flex-col gap-[5px]">
                          {group.fields.map((field) => (
                            <FieldRow key={field.sym + field.sub} field={field} />
                          ))}
                        </div>
                      </div>
                    ))}
                  </div>
                </Panel>
              </div>

              <div className="flex gap-2.5">
                <Panel title="Kommentar" className="h-[47px] flex-1">
                  <div className="flex gap-[5px]">
                    <Select label="Kommentar" value="" className="flex-1 bg-[#e7e7f2]" />
                    <IconButton label="Kommentar übernehmen" off><StackIcon /></IconButton>
                  </div>
                </Panel>
                <Panel title="RSECTION" className="h-[47px] w-[152px]">
                  <IconButton label="RSECTION"><RsectionIcon /></IconButton>
                </Panel>
              </div>
            </div>

            <div className="flex min-w-0 flex-1 flex-col gap-2.5">
              <ShapeGrid />
              <div className="flex flex-1 flex-col bg-white px-[5px] pb-1">
                <p className="h-5 leading-5">1 - KREIS_M1 500</p>
                <Preview />
                <p className="mb-1.5 text-right">[mm]</p>
                <Select label="Ansicht" value="--" className="bg-[#e7e7f2]" />
                <div className="mt-2 flex gap-[3px]">
                  <IconButton label="Drehen" off><RotateIcon /></IconButton>
                  <IconButton label="Profil" off><ProfileIcon /></IconButton>
                  <div className="ml-auto flex gap-[3px]">
                    <IconButton label="Punkte" wide><PointsIcon /></IconButton>
                    <IconButton label="Bemaßung" pressed><DimensionIcon /></IconButton>
                    <IconButton label="Achsen" pressed><AxesIcon /></IconButton>
                    <IconButton label="Schubmittelpunkt"><ShearCenterIcon /></IconButton>
                    <IconButton label="Spannungspunkte"><StressPointsIcon /></IconButton>
                    <IconButton label="Teile" off><SectionIcon /></IconButton>
                    <IconButton label="Nummerierung" off><NumbersIcon /></IconButton>
                    <IconButton label="Raster"><GridIcon /></IconButton>
                    <IconButton label="Skala" off><ScaleIcon /></IconButton>
                    <IconButton label="Drucken" wide><PrintIcon /></IconButton>
                    <IconButton label="Zoom zurücksetzen"><ResetZoomIcon /></IconButton>
                  </div>
                </div>
              </div>
            </div>
          </div>
        </div>
      </main>

      <footer className="relative flex h-[42px] items-center gap-2.5 pl-[9px] pr-2.5">
        <IconButton label="Hilfe"><HelpIcon /></IconButton>
        <IconButton label="Einheiten"><DecimalsIcon /></IconButton>
        <div className="flex gap-[3px]">
          <button type="button" aria-label="Farbe" className="size-[21px] border border-black bg-[#ccffff]" />
          <IconButton label="Darstellung"><DisplayIcon /></IconButton>
        </div>
        <IconButton label="Ansicht"><MonitorIcon /></IconButton>
        <IconButton label="Formel"><FunctionIcon /></IconButton>
        <div className="ml-auto flex gap-2.5">
          {["OK", "Abbrechen", "Anwenden"].map((label) => (
            <button key={label} type="button" className="h-[21px] w-[81px] border border-[#adadad] bg-[#e1e1e1]">
              {label}
            </button>
          ))}
        </div>
        <svg viewBox="0 0 9 9" className="absolute bottom-0.5 right-0.5 size-[9px]" fill="#bdbdbd">
          <path d="M6 0H8V2H6ZM3 3H5V5H3ZM6 3H8V5H6ZM0 6H2V8H0ZM3 6H5V8H3ZM6 6H8V8H6Z" />
        </svg>
      </footer>
    </div>
  );
}
